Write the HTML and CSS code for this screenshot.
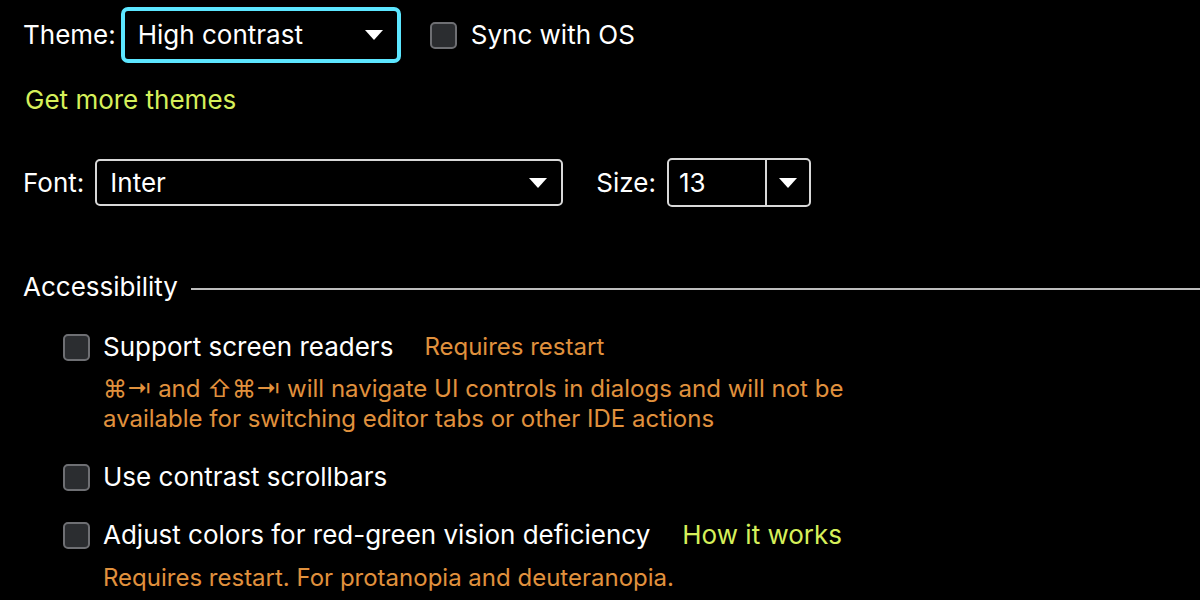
FILE: index.html
```html
<!DOCTYPE html>
<html lang="en">

<head>
  <meta charset="UTF-8">
  <meta name="viewport" content="width=device-width, initial-scale=1.0">
  <title>Appearance</title>

  <link rel="stylesheet" href="styles.css">
</head>

<body>
  <main class="settings">
    <div class="row theme-row">
      <span class="label">Theme:</span>
      <div class="combo combo-focused theme-combo">
        <span class="combo-value">High contrast</span>
        <span class="arrow"></span>
      </div>
      <label class="check sync">
        <span class="box"></span>
        <span>Sync with OS</span>
      </label>
    </div>

    <a class="link more-themes">Get more themes</a>

    <div class="row font-row">
      <span class="label">Font:</span>
      <div class="combo font-combo">
        <span class="combo-value">Inter</span>
        <span class="arrow"></span>
      </div>
      <span class="label size-label">Size:</span>
      <div class="combo size-combo">
        <span class="combo-value">13</span>
        <span class="size-btn"><span class="arrow"></span></span>
      </div>
    </div>

    <section class="group">
      <div class="group-title">
        <span>Accessibility</span>
        <span class="rule"></span>
      </div>

      <div class="option">
        <label class="check">
          <span class="box"></span>
          <span>Support screen readers</span>
          <span class="hint">Requires restart</span>
        </label>
        <p class="note">⌘⇥ and ⇧⌘⇥ will navigate UI controls in dialogs and will not be<br>available for switching editor tabs or other IDE actions</p>
      </div>

      <div class="option">
        <label class="check">
          <span class="box"></span>
          <span>Use contrast scrollbars</span>
        </label>
      </div>

      <div class="option">
        <label class="check">
          <span class="box"></span>
          <span>Adjust colors for red-green vision deficiency</span>
          <a class="link how">How it works</a>
        </label>
        <p class="note">Requires restart. For protanopia and deuteranopia.</p>
      </div>
    </section>
  </main>
</body>

</html>
```

FILE: styles.css
```css
html,
body {
  background: #000;
  margin: 0;
}

body {
  color: #fff;
  font-family: Inter, "Noto Sans", sans-serif;
  font-size: 26px;
  line-height: 30px;
}

.settings {
  padding: 7px 0 0 23px;
}

.row {
  align-items: center;
  display: flex;
}

.theme-row .label {
  margin-right: 5px;
}

.font-row .label {
  margin-right: 11px;
}

.combo {
  align-items: center;
  border: 2px solid #d8d8d8;
  border-radius: 5px;
  box-sizing: border-box;
  display: flex;
  height: 47px;
  padding-left: 13px;
}

.combo-value {
  flex: 1;
}

.combo-focused {
  border: 4px solid #5ce6ff;
  border-radius: 7px;
  height: 56px;
  padding-left: 13px;
}

.theme-combo {
  width: 280px;
}

.font-combo {
  width: 468px;
}

.arrow {
  border-left: 9px solid transparent;
  border-right: 9px solid transparent;
  border-top: 10px solid #fff;
  height: 0;
  margin-right: 14px;
  width: 0;
}

.font-row .size-label {
  margin-left: 33px;
  margin-right: 11px;
}

.size-combo {
  height: 49px;
  padding-left: 10px;
  width: 144px;
}

.size-btn {
  align-items: center;
  align-self: stretch;
  border-left: 2px solid #d8d8d8;
  display: flex;
  justify-content: center;
  width: 42px;
}

.size-btn .arrow {
  margin: 0;
}

.check {
  align-items: center;
  display: flex;
}

.box {
  background: #2b2d30;
  border: 2px solid #6e6f73;
  border-radius: 5px;
  box-sizing: border-box;
  height: 27px;
  margin-right: 13px;
  width: 27px;
}

.sync {
  margin-left: 29px;
}

.sync .box {
  margin-right: 14px;
}

.link {
  color: #d6f05a;
}

.more-themes {
  display: block;
  margin-top: 22px;
  padding-left: 2px;
}

.font-row {
  margin-top: 43px;
}

.group {
  margin-top: 65px;
}

.group-title {
  align-items: center;
  display: flex;
}

.rule {
  background: #bdbdbd;
  flex: 1;
  height: 2px;
  margin-left: 13px;
  margin-top: 3px;
}

.option {
  margin-left: 40px;
}

.group-title + .option {
  margin-top: 30px;
}

.option + .option {
  margin-top: 28px;
}

.hint {
  color: #e0913d;
  font-size: 24px;
  margin-left: 31px;
}

.how {
  margin-left: 32px;
}

.note {
  color: #e0913d;
  font-size: 24px;
  margin: 12px 0 0 40px;
}

.option:last-child .note {
  margin-top: 13px;
}
```
